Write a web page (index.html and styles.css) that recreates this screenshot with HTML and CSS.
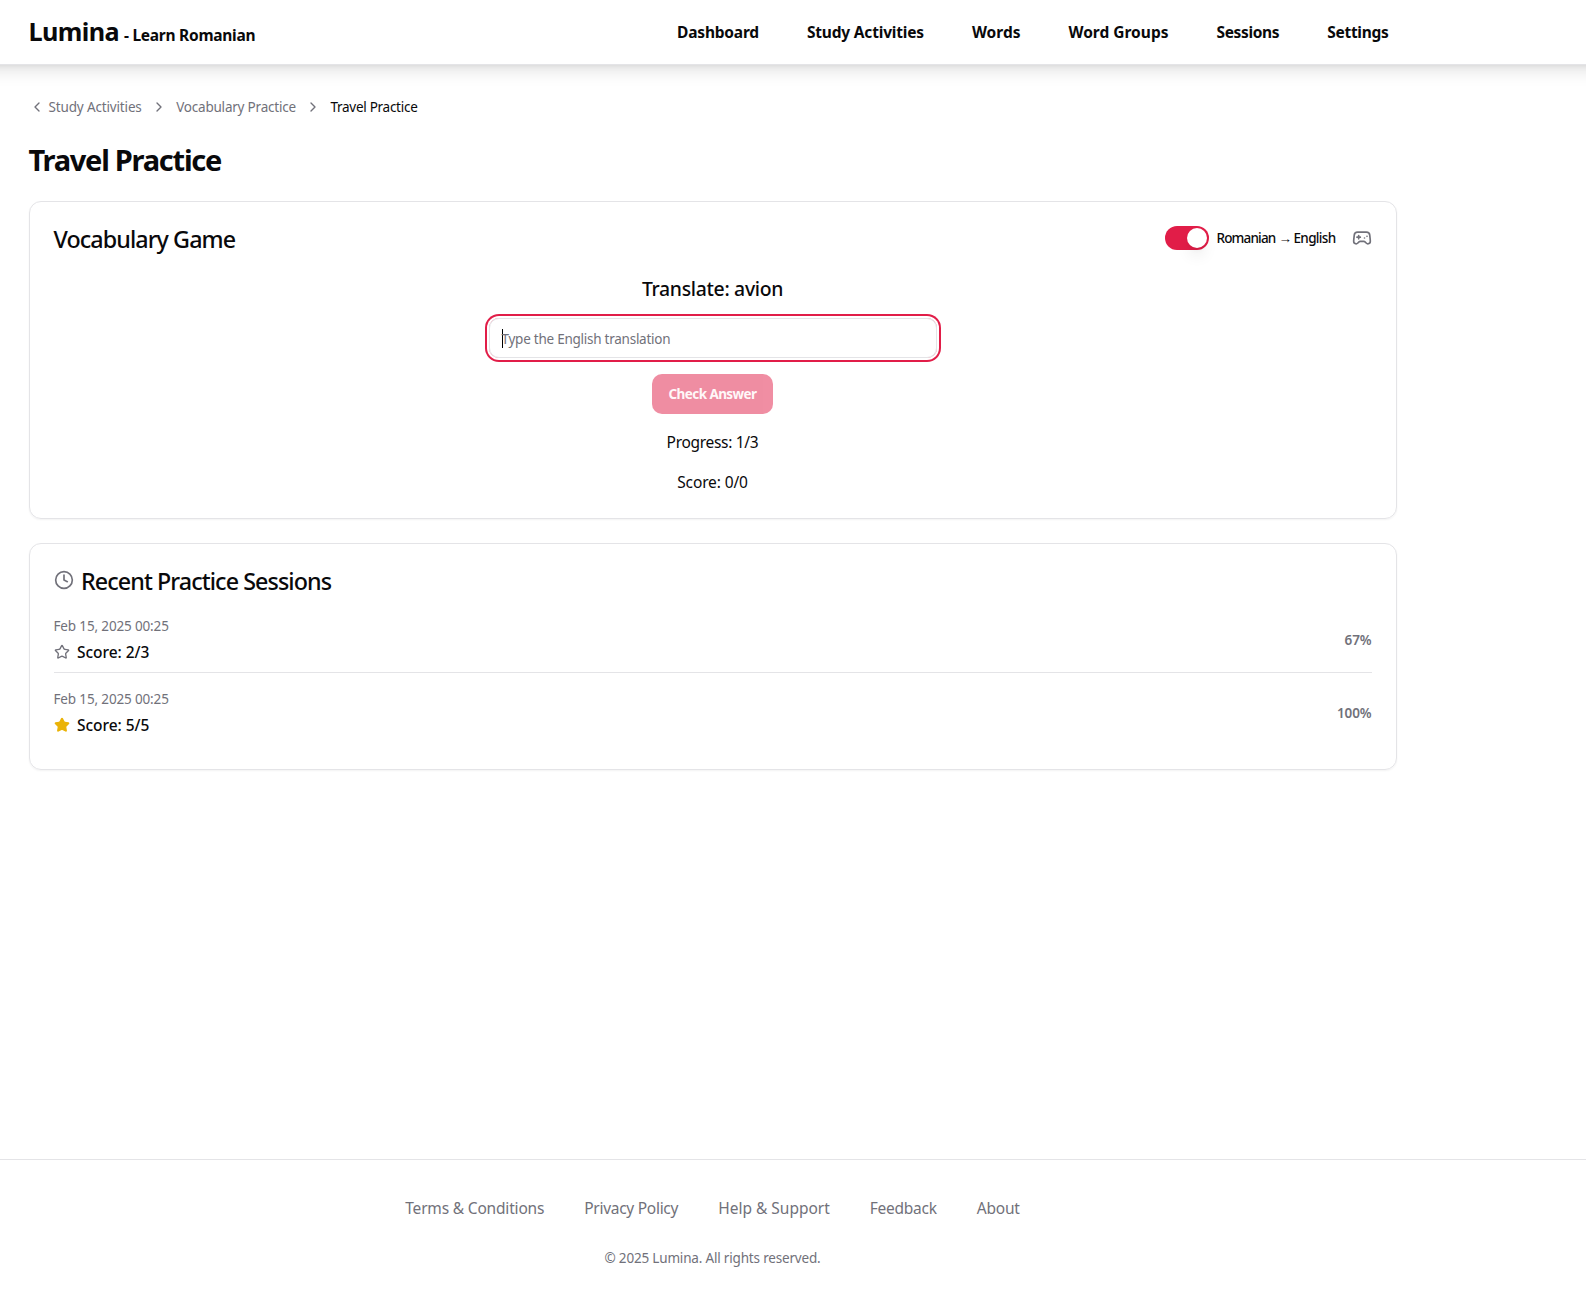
FILE: index.html
```
<!DOCTYPE html>
<html lang="en">
<head>
<meta charset="utf-8">
<title>Lumina - Learn Romanian</title>
<link rel="stylesheet" href="styles.css">
</head>
<body>
<header class="site-header">
  <div class="container header-row">
    <a class="brand"><span class="brand-name">Lumina</span><span class="brand-sub">- Learn Romanian</span></a>
    <nav class="main-nav">
      <a class="nav-dashboard">Dashboard</a>
      <a class="nav-activities">Study Activities</a>
      <a class="nav-words">Words</a>
      <a class="nav-groups">Word Groups</a>
      <a class="nav-sessions">Sessions</a>
      <a class="nav-settings">Settings</a>
    </nav>
  </div>
</header>

<main class="container main">
  <nav class="breadcrumb">
    <svg class="icon" viewBox="0 0 24 24"><path d="m15 18-6-6 6-6"/></svg>
    <a class="crumb-first">Study Activities</a>
    <svg class="icon sep" viewBox="0 0 24 24"><path d="m9 18 6-6-6-6"/></svg>
    <a class="crumb-second">Vocabulary Practice</a>
    <svg class="icon sep" viewBox="0 0 24 24"><path d="m9 18 6-6-6-6"/></svg>
    <span class="crumb-current">Travel Practice</span>
  </nav>

  <h1 class="page-title">Travel Practice</h1>

  <section class="card">
    <div class="card-header">
      <h2 class="card-title">Vocabulary Game</h2>
      <div class="direction">
        <span class="switch"><span class="thumb"></span></span>
        <span class="direction-label"><span>Romanian</span><span class="arrow">→</span><span class="lang-to">English</span></span>
        <svg class="icon icon-lg" viewBox="0 0 24 24"><path d="M6 11h4M8 9v4M15 12h.01M18 10h.01"/><path d="M17.32 5H6.68a4 4 0 0 0-3.978 3.59c-.006.052-.01.101-.017.152C2.604 9.416 2 14.456 2 16a3 3 0 0 0 3 3c1 0 1.5-.5 2-1l1.414-1.414A2 2 0 0 1 9.828 16h4.344a2 2 0 0 1 1.414.586L17 18c.5.5 1 1 2 1a3 3 0 0 0 3-3c0-1.545-.604-6.584-.685-7.258-.007-.05-.011-.1-.017-.151A4 4 0 0 0 17.32 5z"/></svg>
      </div>
    </div>
    <div class="game">
      <p class="prompt">Translate: avion</p>
      <div class="field"><span class="caret"></span><span class="placeholder">Type the English translation</span></div>
      <button class="check" disabled>Check Answer</button>
      <p class="progress">Progress: 1/3</p>
      <p class="score">Score: 0/0</p>
    </div>
  </section>

  <section class="card">
    <div class="card-header recent-header">
      <svg class="icon icon-lg" viewBox="0 0 24 24"><circle cx="12" cy="12" r="10"/><path d="M12 6v6l4 2"/></svg>
      <h2 class="card-title">Recent Practice Sessions</h2>
    </div>
    <ul class="sessions">
      <li class="session">
        <div class="session-info">
          <span class="date">Feb 15, 2025 00:25</span>
          <span class="result"><svg class="icon" viewBox="0 0 24 24"><path d="M11.525 2.295a.53.53 0 0 1 .95 0l2.31 4.679a2.123 2.123 0 0 0 1.595 1.16l5.166.756a.53.53 0 0 1 .294.904l-3.736 3.638a2.123 2.123 0 0 0-.611 1.878l.882 5.14a.53.53 0 0 1-.771.56l-4.618-2.428a2.122 2.122 0 0 0-1.973 0L6.396 21.01a.53.53 0 0 1-.77-.56l.881-5.139a2.122 2.122 0 0 0-.611-1.879L2.16 9.795a.53.53 0 0 1 .294-.906l5.165-.755a2.122 2.122 0 0 0 1.597-1.16z"/></svg><span>Score: 2/3</span></span>
        </div>
        <span class="percent">67%</span>
      </li>
      <li class="session">
        <div class="session-info">
          <span class="date">Feb 15, 2025 00:25</span>
          <span class="result"><svg class="icon star-full" viewBox="0 0 24 24"><path d="M11.525 2.295a.53.53 0 0 1 .95 0l2.31 4.679a2.123 2.123 0 0 0 1.595 1.16l5.166.756a.53.53 0 0 1 .294.904l-3.736 3.638a2.123 2.123 0 0 0-.611 1.878l.882 5.14a.53.53 0 0 1-.771.56l-4.618-2.428a2.122 2.122 0 0 0-1.973 0L6.396 21.01a.53.53 0 0 1-.77-.56l.881-5.139a2.122 2.122 0 0 0-.611-1.879L2.16 9.795a.53.53 0 0 1 .294-.906l5.165-.755a2.122 2.122 0 0 0 1.597-1.16z"/></svg><span>Score: 5/5</span></span>
        </div>
        <span class="percent">100%</span>
      </li>
    </ul>
  </section>
</main>

<footer class="site-footer">
  <div class="container footer-inner">
    <nav class="footer-nav">
      <a class="foot-terms">Terms &amp; Conditions</a>
      <a class="foot-privacy">Privacy Policy</a>
      <a class="foot-help">Help &amp; Support</a>
      <a class="foot-feedback">Feedback</a>
      <a class="foot-about">About</a>
    </nav>
    <p class="copyright">© 2025 Lumina. All rights reserved.</p>
  </div>
</footer>
</body>
</html>
```
FILE: styles.css
```
:root {
  --fg: #09090b;
  --muted: #71717a;
  --border: #e4e4e7;
  --primary: #e11d48;
}

* { box-sizing: border-box; margin: 0; padding: 0; }

body {
  display: flex;
  flex-direction: column;
  min-height: 1293px;
  overflow-x: clip;
  background: #fff;
  color: var(--fg);
  font-family: "Segoe UI", "Noto Sans", "Open Sans", sans-serif;
  font-size: 15.5px;
  line-height: 24px;
}

.container { width: 1399px; margin-left: 13px; padding: 0 15.5px 0 15.5px; }

.icon {
  flex: none;
  width: 16px;
  height: 16px;
  fill: none;
  stroke: var(--muted);
  stroke-width: 2;
  stroke-linecap: round;
  stroke-linejoin: round;
}
.icon-lg { width: 20px; height: 20px; }

/* Header */
.site-header {
  height: 65px;
  margin: 0 -24px;
  padding: 0 24px;
  border-bottom: 1px solid var(--border);
  background: #fff;
  box-shadow: 0 10px 15px -3px rgba(0, 0, 0, .1), 0 4px 6px -4px rgba(0, 0, 0, .1);
}
.header-row { display: flex; align-items: center; justify-content: space-between; height: 64px; }
.brand { display: flex; align-items: baseline; gap: 5px; padding-bottom: 2px; font-weight: 700; white-space: nowrap; }
.brand-name { font-size: 25.2px; letter-spacing: -.6px; line-height: 32px; }
.brand-sub { letter-spacing: -.26px; }
.main-nav { display: flex; gap: 48px; padding-right: 8px; font-weight: 700; white-space: nowrap; }
.nav-dashboard { letter-spacing: -.2px; }
.nav-activities { letter-spacing: -.19px; }
.nav-sessions { letter-spacing: -.35px; }
.nav-settings { letter-spacing: -.28px; }

/* Page body */
.main { flex: 1; padding-top: 32px; }
.breadcrumb {
  display: flex;
  align-items: center;
  height: 20px;
  margin-bottom: 24px;
  color: var(--muted);
  font-size: 13.5px;
  line-height: 20px;
  white-space: nowrap;
}
.crumb-first { margin-left: 4px; letter-spacing: -.15px; }
.crumb-second { letter-spacing: -.21px; }
.crumb-current { color: var(--fg); letter-spacing: -.27px; }
.sep { margin: 0 9px 0 9.5px; }
.page-title { padding-top: 1px; margin-bottom: 23px; font-size: 29px; line-height: 36px; letter-spacing: -1.25px; }

.card {
  margin-bottom: 24px;
  padding: 24px;
  border: 1px solid var(--border);
  border-radius: 12px;
  box-shadow: 0 1px 2px rgba(0, 0, 0, .05);
}
.card-header { display: flex; justify-content: space-between; height: 24px; margin-bottom: 24px; }
.card-title { padding-top: 1px; font-size: 23.3px; font-weight: 500; line-height: 24px; letter-spacing: -.92px; white-space: nowrap; }

.direction { display: flex; align-items: center; }
.switch { display: flex; justify-content: flex-end; width: 44px; height: 24px; padding: 2px; border-radius: 12px; background: var(--primary); }
.thumb {
  width: 20px;
  height: 20px;
  border-radius: 50%;
  background: #fff;
  box-shadow: 0 10px 15px -3px rgba(0, 0, 0, .1), 0 4px 6px -4px rgba(0, 0, 0, .1);
}
.direction-label { display: flex; width: 119px; margin: 0 16px 0 8px; font-size: 13.5px; font-weight: 500; line-height: 24px; letter-spacing: -.83px; }
.arrow { width: 13px; margin: 0 2px 0 3px; letter-spacing: 0; }
.lang-to { letter-spacing: -.65px; }

.game { display: flex; flex-direction: column; align-items: center; gap: 16px; }
.prompt { padding-top: 2px; font-size: 19.4px; font-weight: 500; line-height: 26px; letter-spacing: -.31px; }
.field {
  display: flex;
  align-items: center;
  width: 448px;
  height: 40px;
  padding: 0 12px;
  border: 1px solid var(--border);
  border-radius: 10px;
  box-shadow: 0 0 0 2px #fff, 0 0 0 4px var(--primary);
}
.caret { width: 1px; height: 19px; margin-right: -1px; background: #000; }
.placeholder { padding-top: 2px; color: var(--muted); font-size: 13.5px; line-height: 20px; letter-spacing: -.25px; }
.check {
  width: 121px;
  height: 40px;
  border: 0;
  border-radius: 10px;
  background: var(--primary);
  color: #fff1f2;
  opacity: .5;
  font: 700 13.5px/20px "Segoe UI", "Noto Sans", sans-serif;
  letter-spacing: -.58px;
}
.progress { letter-spacing: -.3px; }
.score { letter-spacing: -.13px; }

.recent-header { justify-content: flex-start; align-items: center; gap: 7.5px; }
.sessions { display: flex; flex-direction: column; gap: 16px; list-style: none; }
.session { display: flex; align-items: center; justify-content: space-between; padding-bottom: 8px; border-bottom: 1px solid var(--border); }
.session:last-child { border-bottom: 0; }
.session-info { display: flex; flex-direction: column; gap: 4px; }
.date { color: var(--muted); font-size: 13.5px; line-height: 20px; letter-spacing: -.15px; }
.result { display: flex; align-items: center; gap: 7.5px; font-weight: 500; letter-spacing: -.05px; }
.star-full { fill: #eab308; stroke: #eab308; }
.percent { color: var(--muted); font-size: 13.5px; font-weight: 600; line-height: 20px; letter-spacing: -.1px; }

/* Footer */
.site-footer { height: 134px; border-top: 1px solid var(--border); color: var(--muted); }
.footer-inner { display: flex; flex-direction: column; align-items: center; gap: 28px; padding-top: 36px; }
.footer-nav { display: flex; gap: 40px; white-space: nowrap; }
.foot-terms { letter-spacing: -.18px; }
.foot-privacy, .foot-feedback { letter-spacing: -.28px; }
.foot-about { letter-spacing: -.17px; }
.copyright { font-size: 13.5px; line-height: 20px; letter-spacing: -.18px; }
```
